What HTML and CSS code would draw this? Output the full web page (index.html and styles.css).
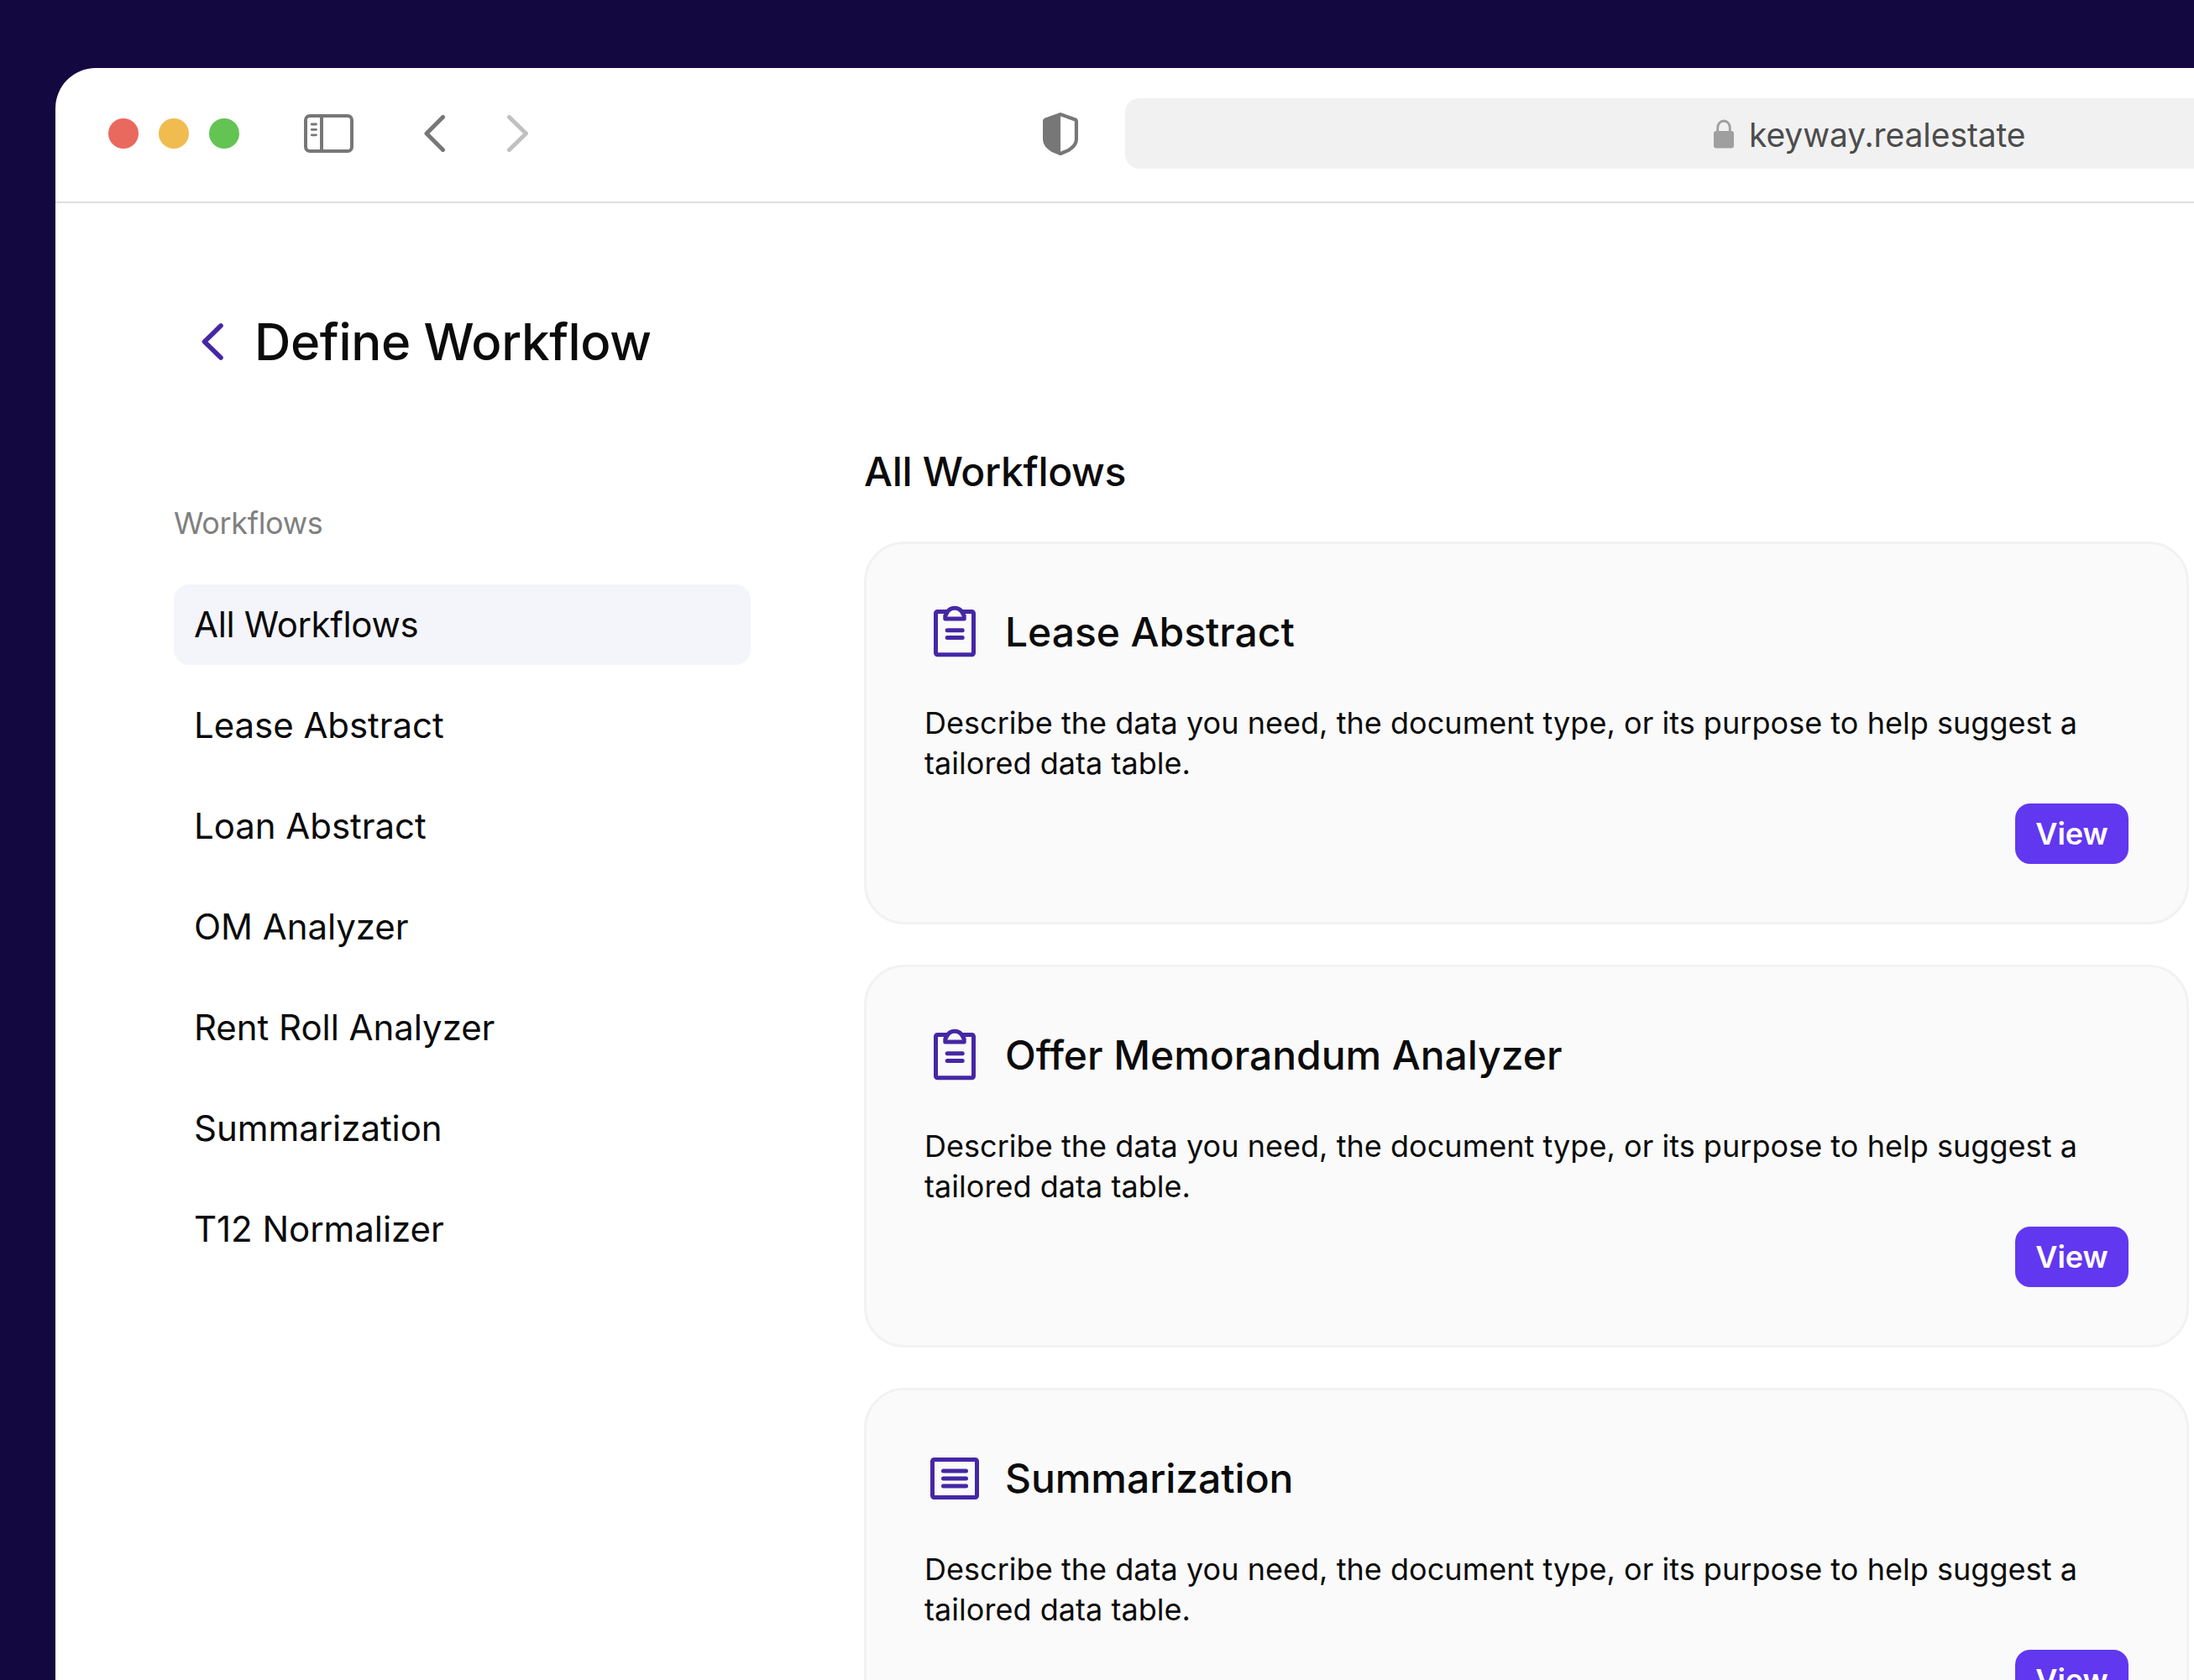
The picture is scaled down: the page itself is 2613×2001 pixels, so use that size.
FILE: index.html
```
<!DOCTYPE html>
<html lang="en">

<head>
  <title>Define Workflow</title>
  <meta charset="utf-8">
  <meta name="viewport" content="width=device-width, initial-scale=1.0">
  <link rel="stylesheet" href="styles.css">
</head>

<body>
  <!-- icons shared by the cards -->
  <svg class="sprite" width="0" height="0">
    <symbol id="icon-clipboard" viewBox="0 0 72 72">
      <path d="M26 11.500H15.500a2 2 0 0 0-2 2V60.800a2 2 0 0 0 2 2H56.500a2 2 0 0 0 2-2V13.500a2 2 0 0 0-2-2H46" />
      <path d="M24.800 20H47.200V16.500L45.600 13.500a10.500 10.500 0 0 0-19.200 0L24.800 16.500z" />
      <path d="M27.200 33.700H45.200M27.200 42.600H45.200" />
    </symbol>
    <symbol id="icon-list" viewBox="0 0 72 72">
      <rect x="9.500" y="13.500" width="53" height="45" rx="2" />
      <path d="M22.500 27H49.500M22.500 36H49.500M22.500 45H49.500" />
    </symbol>
  </svg>

  <div class="window">
    <header class="toolbar">
      <div class="lights">
        <span class="light red"></span>
        <span class="light yellow"></span>
        <span class="light green"></span>
      </div>
      <svg class="sidebar-icon" viewBox="0 0 59 46">
        <rect x="2" y="2" width="55" height="42" rx="5" />
        <path d="M21 2V44" />
        <path class="thin" d="M9.200 12H14.500M9.200 18.300H14.500M9.200 24.800H14.500" />
      </svg>
      <svg class="nav-icon" viewBox="0 0 26 44">
        <path d="M22.500 2.500L3 22L22.500 41.500" />
      </svg>
      <svg class="nav-icon forward" viewBox="0 0 26 44">
        <path d="M2.500 2.500L22.500 22L2.500 41.500" />
      </svg>
      <svg class="shield-icon" viewBox="0 0 42 51">
        <path class="outline" d="M21 2.200L38 8.200a2.500 2.500 0 0 1 1.900 2.400V32c0 6-4 9.500-9 12.800L21 49L11 44.800C6 41.500 2.100 38 2.100 32V10.600A2.500 2.500 0 0 1 4 8.200z" />
        <path d="M21 2L4 8.200 2 11V33l4 7 15 9.500z" />
      </svg>
      <div class="address">
        <svg class="lock-icon" viewBox="0 0 24 35">
          <path d="M4.700 16V10a7.300 8 0 0 1 14.600 0V16" />
          <rect x="0" y="14" width="24" height="20.500" rx="3" />
        </svg>
        <span class="url">keyway.realestate</span>
      </div>
    </header>

    <div class="title-row">
      <svg class="back-icon" viewBox="0 0 26 44">
        <path d="M23 3L3.500 22L23 41" />
      </svg>
      <h1>Define Workflow</h1>
    </div>

    <div class="content">
      <nav class="sidebar">
        <p class="sidebar-label">Workflows</p>
        <ul>
          <li class="active">All Workflows</li>
          <li>Lease Abstract</li>
          <li>Loan Abstract</li>
          <li>OM Analyzer</li>
          <li>Rent Roll Analyzer</li>
          <li>Summarization</li>
          <li>T12 Normalizer</li>
        </ul>
      </nav>

      <main class="workflows">
        <h2>All Workflows</h2>

        <div class="card">
          <div class="card-title">
            <svg class="card-icon"><use href="#icon-clipboard" /></svg>
            <h3>Lease Abstract</h3>
          </div>
          <p>Describe the data you need, the document type, or its purpose to help suggest a tailored data table.</p>
          <button class="view-button">View</button>
        </div>

        <div class="card">
          <div class="card-title">
            <svg class="card-icon"><use href="#icon-clipboard" /></svg>
            <h3>Offer Memorandum Analyzer</h3>
          </div>
          <p>Describe the data you need, the document type, or its purpose to help suggest a tailored data table.</p>
          <button class="view-button">View</button>
        </div>

        <div class="card">
          <div class="card-title">
            <svg class="card-icon"><use href="#icon-list" /></svg>
            <h3>Summarization</h3>
          </div>
          <p>Describe the data you need, the document type, or its purpose to help suggest a tailored data table.</p>
          <button class="view-button">View</button>
        </div>
      </main>
    </div>
  </div>
</body>

</html>
```
FILE: styles.css
```
* {
  box-sizing: border-box;
}

body {
  margin: 0;
  height: 2001px;
  padding: 81px 0 0 66px;
  overflow: hidden;
  background-color: #140840;
  color: #0b0b0b;
  font-family: Inter, sans-serif;
}

h1, h2, h3, p, ul {
  margin: 0;
  padding: 0;
}

svg {
  display: block;
  flex: none;
  fill: none;
  stroke-linecap: round;
  stroke-linejoin: round;
}

.sprite {
  position: absolute;
}

.window {
  height: 1920px;
  overflow: hidden;
  background-color: white;
  border-top-left-radius: 48px;
}

/* browser toolbar */
.toolbar {
  display: flex;
  align-items: center;
  height: 161px;
  padding: 0 0 3px 63px;
  border-bottom: 2px solid #dfdfdf;
}

.lights {
  display: flex;
  gap: 24px;
}

.light {
  width: 36px;
  height: 36px;
  border-radius: 50%;
}

.red {
  background-color: #e9695f;
}

.yellow {
  background-color: #f0bc50;
}

.green {
  background-color: #63c454;
}

.sidebar-icon {
  width: 59px;
  height: 46px;
  margin-left: 77px;
  stroke: #777;
  stroke-width: 4;
}

.sidebar-icon .thin {
  stroke-width: 2.8;
}

.nav-icon {
  width: 26px;
  height: 44px;
  margin-left: 84px;
  stroke: #777;
  stroke-width: 5;
}

.forward {
  margin-left: 73px;
  stroke: #c0c0c0;
}

.shield-icon {
  width: 42px;
  height: 51px;
  margin: 1px 0 0 612px;
  fill: #777;
}

.shield-icon .outline {
  fill: none;
  stroke: #777;
  stroke-width: 4.2;
}

.address {
  display: flex;
  flex: none;
  align-items: center;
  width: 1772px;
  height: 84px;
  margin-left: 56px;
  padding-left: 701px;
  border-radius: 17px;
  background-color: #f1f1f1;
  color: #4c4c4c;
  font-size: 39px;
}

.url {
  padding-top: 2px;
  letter-spacing: -0.08px;
}

.lock-icon {
  width: 24px;
  height: 35px;
  margin-right: 18px;
  fill: #9f9f9f;
}

.lock-icon path {
  fill: none;
  stroke: #9f9f9f;
  stroke-width: 2.8;
}

/* page header */
.title-row {
  display: flex;
  align-items: center;
  height: 72px;
  margin-top: 129px;
  padding-left: 174px;
}

.back-icon {
  width: 26px;
  height: 44px;
  stroke: #4527a5;
  stroke-width: 5.6;
}

h1 {
  margin-left: 37px;
  font-size: 60px;
  font-weight: 500;
  letter-spacing: -0.35px;
}

.content {
  display: flex;
  padding-left: 141px;
}

/* sidebar */
.sidebar {
  width: 687px;
  margin-right: 135px;
  padding-top: 156px;
}

.sidebar-label {
  margin-bottom: 49px;
  color: #808080;
  font-size: 36px;
  line-height: 48px;
  letter-spacing: -0.35px;
}

.sidebar ul {
  display: flex;
  flex-direction: column;
  gap: 24px;
  list-style: none;
}

.sidebar li {
  padding: 0 24px;
  border-radius: 18px;
  font-size: 42px;
  line-height: 96px;
  letter-spacing: -0.05px;
}

.sidebar .active {
  background-color: #f4f4fb;
  letter-spacing: -0.35px;
}

/* workflow cards */
.workflows {
  display: flex;
  flex: none;
  flex-direction: column;
  width: 1578px;
  padding-top: 83px;
}

h2 {
  height: 72px;
  margin-bottom: 47px;
  font-size: 48px;
  font-weight: 500;
  line-height: 72px;
  letter-spacing: -0.3px;
}

.card {
  display: flex;
  flex-direction: column;
  margin-bottom: 48px;
  padding: 69px;
  border: 3px solid #f2f2f2;
  border-radius: 48px;
  background-color: #fafafa;
}

.card-title {
  display: flex;
  align-items: center;
  gap: 24px;
  margin-bottom: 48px;
}

.card-icon {
  width: 72px;
  height: 72px;
  stroke: #4527a5;
  stroke-width: 5;
}

h3 {
  font-size: 48px;
  font-weight: 500;
  line-height: 72px;
  letter-spacing: -0.05px;
}

.card p {
  margin-bottom: 24px;
  font-size: 36px;
  line-height: 48px;
  letter-spacing: 0.04px;
}

.view-button {
  align-self: flex-end;
  width: 135px;
  height: 72px;
  padding: 0 0 1px;
  border: none;
  border-radius: 18px;
  background-color: #6237f0;
  color: white;
  font-family: inherit;
  font-size: 36px;
  font-weight: 600;
}
```
